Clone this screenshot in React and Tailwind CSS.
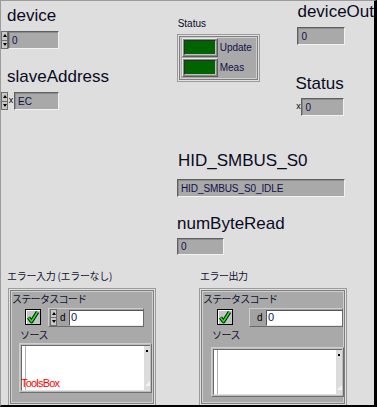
import React from 'react';

const sans = "font-['Liberation_Sans',Arial,sans-serif]";
const jp = "font-['Noto_Sans_CJK_JP','Liberation_Sans',sans-serif]";

function Spin({ className = '' }) {
  return (
    <div className={`flex flex-col w-[7px] bg-[#c9c9c9] border border-[#6e6e6e] ${className}`}>
      <div className="flex-1 flex items-center justify-center border-b border-[#6e6e6e]">
        <div className="w-0 h-0 border-l-[2.5px] border-r-[2.5px] border-b-[3px] border-l-transparent border-r-transparent border-b-black" />
      </div>
      <div className="flex-1 flex items-center justify-center">
        <div className="w-0 h-0 border-l-[2.5px] border-r-[2.5px] border-t-[3px] border-l-transparent border-r-transparent border-t-black" />
      </div>
    </div>
  );
}

function Box({ className = '', children }) {
  return (
    <div
      className={`flex items-center pl-[3px] bg-[#a9a9a9] border border-t-[#606060] border-l-[#606060] border-b-[#f2f2f2] border-r-[#f2f2f2] shadow-[inset_1px_1px_0_#8c8c8c] text-[10px] text-[#10104a] ${sans} ${className}`}
    >
      {children}
    </div>
  );
}

function Label({ className = '', children }) {
  return (
    <div className={`text-[17px] leading-[20px] text-[#0a0a1e] whitespace-nowrap ${sans} ${className}`}>
      {children}
    </div>
  );
}

function Frame({ className = '', children }) {
  return (
    <div className={`border border-[#9a9a9a] ${className}`}>
      <div className="h-full border border-[#e2e2e2]">
        <div className="h-full border border-[#7e7e7e]">
          <div className="h-full border border-[#cfcfcf] bg-[#a9a9a9]">{children}</div>
        </div>
      </div>
    </div>
  );
}

function Led({ label }) {
  return (
    <div className="flex items-center gap-[2px]">
      <div className="w-[36px] h-[19px] border border-t-[#e6e6e6] border-l-[#e6e6e6] border-b-[#5c5c5c] border-r-[#5c5c5c] p-[1px] bg-[#8a8a8a]">
        <div className="w-full h-full bg-[#006400] border border-t-[#2d2d2d] border-l-[#2d2d2d] border-b-[#c0c0c0] border-r-[#c0c0c0]" />
      </div>
      <span className={`text-[10px] text-[#10104a] ${sans}`}>{label}</span>
    </div>
  );
}

function Check() {
  return (
    <div className="w-[16px] h-[16px] border border-black bg-[#c4c4c4] shadow-[inset_1px_1px_0_#ffffff]">
      <svg width="14" height="14" viewBox="0 0 14 14">
        <path d="M2.5 7.5 L5.5 11.5 L11.5 2" fill="none" stroke="#000" strokeWidth="3.6" strokeLinejoin="round" />
        <path d="M2.5 7.5 L5.5 11.5 L11.5 2" fill="none" stroke="#18e818" strokeWidth="1.8" strokeLinejoin="round" />
      </svg>
    </div>
  );
}

function ErrorCluster({ spin, checkMl, numMl, srcMl, areaMl, areaMt, tools }) {
  return (
    <Frame className="w-[148px] h-[118px]">
      <div className="flex flex-col">
        <div className={`text-[10px] leading-[12px] tracking-[-0.7px] text-[#101030] mt-[1px] ${jp}`}>ステータスコード</div>
        <div className="flex items-start mt-[3px]">
          <div className={`mt-[1px] ${checkMl}`}>
            <Check />
          </div>
          <div className={`flex items-center h-[19px] w-[96px] bg-[#a2a2a2] border border-t-[#cdcdcd] border-l-[#cdcdcd] border-b-[#6a6a6a] border-r-[#6a6a6a] ${numMl}`}>
            {spin ? <Spin className="h-[17px] ml-[1px]" /> : <div className="w-[4px]" />}
            <span className={`text-[10px] text-black ml-[3px] w-[9px] ${sans}`}>d</span>
            <div className={`flex-1 h-[16px] bg-white border border-t-[#555] border-l-[#555] border-b-[#e8e8e8] border-r-0 flex items-center pl-[1px] text-[11px] text-[#0c1860] ${sans}`}>
              0
            </div>
          </div>
        </div>
        <div className={`text-[10px] leading-[12px] tracking-[-0.5px] text-[#101030] mt-[2px] ${jp} ${srcMl}`}>ソース</div>
        <div className={`relative w-[133px] h-[50px] border border-t-[#cfcfcf] border-l-[#cfcfcf] border-b-[#6e6e6e] border-r-[#6e6e6e] bg-[#bdbdbd] p-[1px] ${areaMl} ${areaMt}`}>
          <div className="flex h-full border border-t-[#6a6a6a] border-l-[#6a6a6a] border-b-[#e0e0e0] border-r-0">
            <div className="w-[4px] bg-white border-r border-[#b0b0b0]" />
            <div className="flex-1 bg-white" />
            <div className="w-[6px] bg-[#dcdcdc] flex flex-col justify-between items-center py-[4px]">
              <div className="w-[2px] h-[2px] bg-black" />
              <div className="w-0 h-0 border-l-[5px] border-b-[5px] border-l-transparent border-b-[#f4f4f4]" />
            </div>
          </div>
          {tools && (
            <span className={`absolute left-[1px] bottom-[3px] text-[11px] leading-[11px] tracking-[-0.8px] text-[#ff0000] ${sans}`}>ToolsBox</span>
          )}
        </div>
      </div>
    </Frame>
  );
}

export default function App() {
  return (
    <div className="w-[377px] h-[407px] overflow-hidden bg-[#dedede] border-t border-l border-[#9c9c9c] border-r-[3px] border-r-black border-b-2 border-b-black flex flex-col">
      <div className="flex items-start">
        <div className="w-[176px] flex flex-col">
          <Label className="ml-[6px] mt-[5px]">device</Label>
          <div className="flex mt-[5px]">
            <Spin className="h-[18px]" />
            <Box className="w-[51px] h-[18px]">0</Box>
          </div>
          <Label className="ml-[6px] mt-[18px]">slaveAddress</Label>
          <div className="flex items-center mt-[5px]">
            <Spin className="h-[18px]" />
            <span className={`text-[9px] text-black w-[6px] text-center ${sans}`}>x</span>
            <Box className="w-[45px] h-[18px]">EC</Box>
          </div>
        </div>
        <div className="w-[119px] flex flex-col">
          <div className={`text-[10px] leading-[12px] text-[#0a0a1e] ml-[1px] mt-[17px] ${sans}`}>Status</div>
          <Frame className="w-[83px] h-[48px] mt-[4px]">
            <div className="flex flex-col gap-[1px] pl-[1px]">
              <Led label="Update" />
              <Led label="Meas" />
            </div>
          </Frame>
        </div>
        <div className="flex flex-col">
          <Label className="ml-[2px] mt-[1px]">deviceOut</Label>
          <Box className="w-[48px] h-[18px] ml-[2px] mt-[5px]">0</Box>
          <Label className="mt-[29px]">Status</Label>
          <div className="flex items-center mt-[4px]">
            <span className={`text-[9px] text-black w-[6px] text-center ${sans}`}>x</span>
            <Box className="w-[43px] h-[18px]">0</Box>
          </div>
        </div>
      </div>

      <div className="flex flex-col ml-[176px]">
        <Label className="ml-[1px] mt-[35px]">HID_SMBUS_S0</Label>
        <Box className="w-[168px] h-[18px] mt-[8px] text-[9.5px] tracking-[-0.1px]">HID_SMBUS_S0_IDLE</Box>
        <Label className="mt-[17px]">numByteRead</Label>
        <Box className="w-[47px] h-[17px] mt-[4px]">0</Box>
      </div>

      <div className="flex mt-[15px]">
        <div className="flex flex-col ml-[7px] w-[191px]">
          <div className={`text-[10px] leading-[12px] tracking-[-0.3px] text-[#101030] ml-[-1px] ${jp}`}>エラー入力 (エラーなし)</div>
          <div className="mt-[6px]">
            <ErrorCluster spin checkMl="ml-[13px]" numMl="ml-[7px]" srcMl="ml-[8px]" areaMl="ml-[7px]" areaMt="mt-[2px]" tools />
          </div>
        </div>
        <div className="flex flex-col">
          <div className={`text-[10px] leading-[12px] tracking-[-0.5px] text-[#101030] ml-[1px] ${jp}`}>エラー出力</div>
          <div className="mt-[6px]">
            <ErrorCluster checkMl="ml-[14px]" numMl="ml-[16px]" srcMl="ml-[9px]" areaMl="ml-[8px]" areaMt="mt-[6px]" />
          </div>
        </div>
      </div>
    </div>
  );
}
